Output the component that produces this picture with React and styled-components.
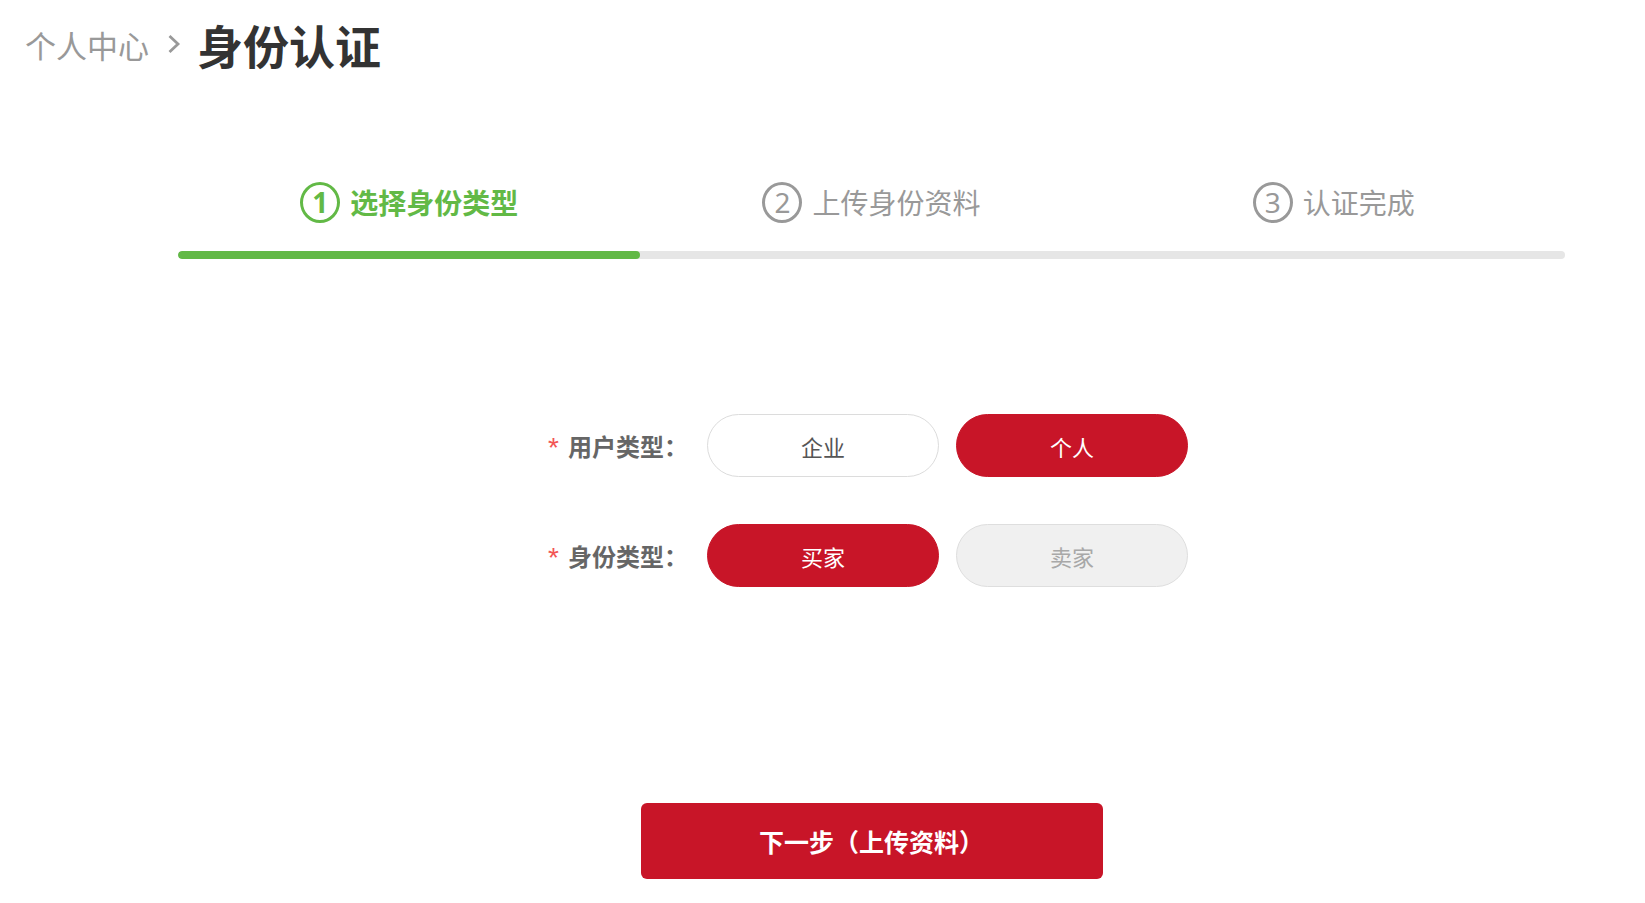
import React, { useState } from "react";
import styled, { createGlobalStyle } from "styled-components";

const GlobalStyle = createGlobalStyle`
  html, body { margin: 0; padding: 0; background: #fff; }
  body { font-family: "Noto Sans CJK SC", "Noto Sans", sans-serif; }
  * { box-sizing: border-box; }
`;

const Page = styled.div`
  width: 1645px;
  min-height: 903px;
  background: #fff;
`;

const Breadcrumb = styled.div`
  height: 88px;
  display: flex;
  align-items: center;
  padding-left: 25px;
`;

const Crumb = styled.span`
  font-size: 31px;
  color: #999;
  line-height: 1;
`;

const Chevron = styled.svg`
  width: 14px;
  height: 22px;
  margin: 0 16px 0 18px;
`;

const Title = styled.h1`
  margin: 0;
  font-size: 46px;
  font-weight: 700;
  color: #333;
  line-height: 1;
`;

const Content = styled.div`
  margin-left: 178px;
  width: 1387px;
`;

const Steps = styled.div`
  display: flex;
  margin-top: 89px;
  height: 50px;
`;

const Step = styled.div`
  flex: 1;
  display: flex;
  align-items: center;
  justify-content: center;
  gap: 10px;
  color: ${(p) => (p.$active ? "#62b946" : "#999")};
`;

const StepNum = styled.span`
  width: 40px;
  height: 41px;
  border-radius: 50%;
  border: 3px solid currentColor;
  display: flex;
  align-items: center;
  justify-content: center;
  font-family: "Noto Sans", sans-serif;
  font-size: 28px;
  font-weight: ${(p) => (p.$active ? 700 : 400)};
  line-height: 1;
`;

const StepLabel = styled.span`
  font-size: 28px;
  font-weight: ${(p) => (p.$active ? 700 : 400)};
  line-height: 1;
`;

const Track = styled.div`
  margin-top: 24px;
  height: 8px;
  border-radius: 4px;
  background: #e6e6e6;
  overflow: hidden;
`;

const Fill = styled.div`
  height: 100%;
  border-radius: 4px;
  background: #62b946;
`;

const Form = styled.div`
  margin-top: 155px;
  display: flex;
  flex-direction: column;
  align-items: center;
  gap: 47px;
  padding-right: 7px;
`;

const Row = styled.div`
  display: flex;
  align-items: center;
`;

const Label = styled.div`
  width: 159px;
  display: flex;
  align-items: center;
  font-size: 24px;
  font-weight: 700;
  color: #666;
  line-height: 1;
`;

const Star = styled.span`
  color: #f25555;
  font-family: "Liberation Sans", sans-serif;
  font-size: 28px;
  font-weight: 400;
  margin-right: 9px;
  position: relative;
  top: 2px;
`;

const Options = styled.div`
  display: flex;
  gap: 17px;
`;

const Option = styled.button`
  width: 232px;
  height: 63px;
  border-radius: 32px;
  font-family: inherit;
  font-size: 22px;
  cursor: ${(p) => (p.$disabled ? "not-allowed" : "pointer")};
  border: 1px solid
    ${(p) => (p.$selected ? "#c81528" : p.$disabled ? "#dedede" : "#dcdcdc")};
  background: ${(p) =>
    p.$selected ? "#c81528" : p.$disabled ? "#f0f0f0" : "#fff"};
  color: ${(p) => (p.$selected ? "#fff" : p.$disabled ? "#a8a8a8" : "#555")};
  padding: 0;
`;

const NextButton = styled.button`
  display: block;
  margin: 216px auto 0;
  width: 462px;
  height: 76px;
  border: none;
  border-radius: 6px;
  background: #c81528;
  color: #fff;
  font-family: inherit;
  font-size: 25px;
  font-weight: 700;
  cursor: pointer;
`;

const steps = ["选择身份类型", "上传身份资料", "认证完成"];

export default function App() {
  const [userType, setUserType] = useState("personal");
  const [role, setRole] = useState("buyer");
  const current = 0;

  return (
    <Page>
      <GlobalStyle />
      <Breadcrumb>
        <Crumb>个人中心</Crumb>
        <Chevron viewBox="0 0 14 22">
          <path d="M2.5 3 L11 11 L2.5 19" fill="none" stroke="#999" strokeWidth="2.8" />
        </Chevron>
        <Title>身份认证</Title>
      </Breadcrumb>
      <Content>
        <Steps>
          {steps.map((s, i) => (
            <Step key={s} $active={i === current}>
              <StepNum $active={i === current}>{i + 1}</StepNum>
              <StepLabel $active={i === current}>{s}</StepLabel>
            </Step>
          ))}
        </Steps>
        <Track>
          <Fill style={{ width: `${((current + 1) / steps.length) * 100}%` }} />
        </Track>
        <Form>
          <Row>
            <Label>
              <Star>*</Star>用户类型：
            </Label>
            <Options>
              <Option $selected={userType === "company"} onClick={() => setUserType("company")}>
                企业
              </Option>
              <Option $selected={userType === "personal"} onClick={() => setUserType("personal")}>
                个人
              </Option>
            </Options>
          </Row>
          <Row>
            <Label>
              <Star>*</Star>身份类型：
            </Label>
            <Options>
              <Option $selected={role === "buyer"} onClick={() => setRole("buyer")}>
                买家
              </Option>
              <Option $disabled>卖家</Option>
            </Options>
          </Row>
        </Form>
        <NextButton>下一步（上传资料）</NextButton>
      </Content>
    </Page>
  );
}
